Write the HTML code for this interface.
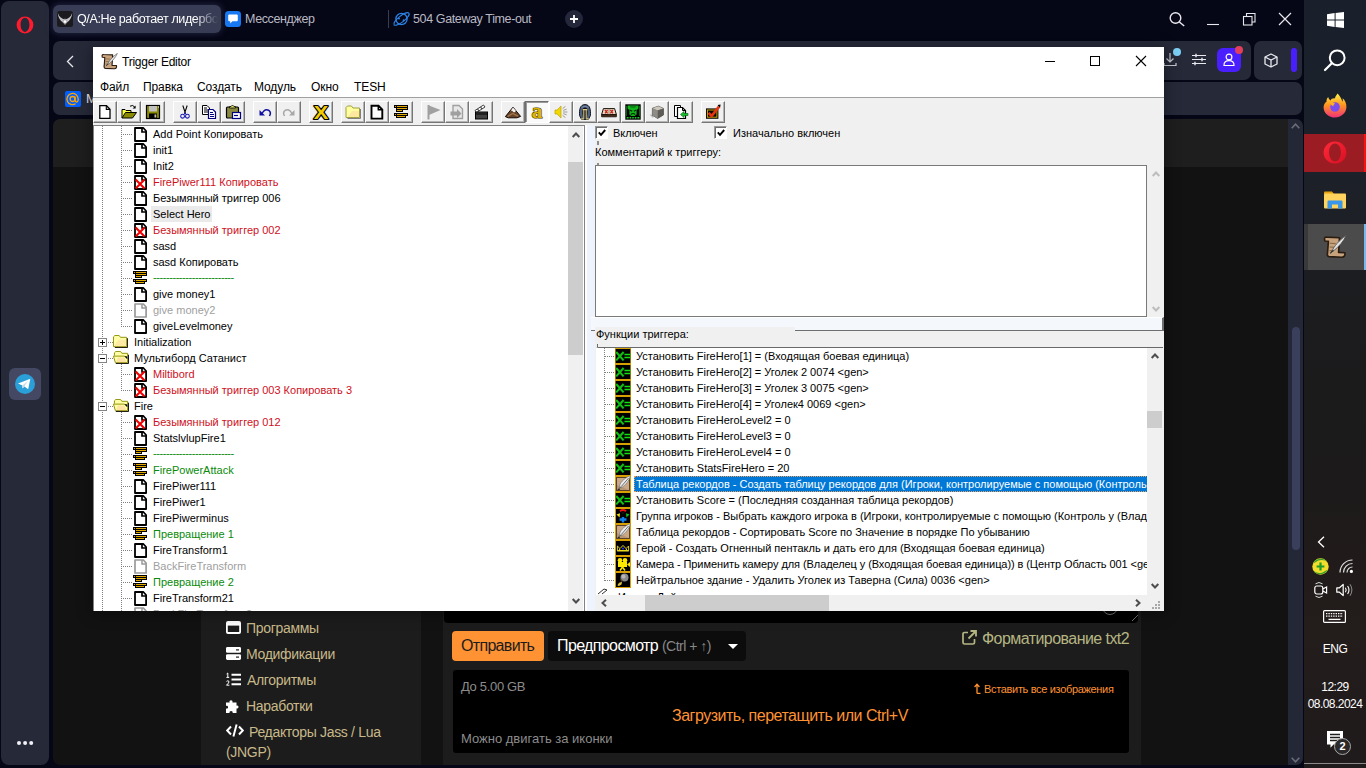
<!DOCTYPE html>
<html lang="ru">
<head>
<meta charset="utf-8">
<title>Trigger Editor</title>
<style>
*{box-sizing:border-box;margin:0;padding:0}
html,body{width:1366px;height:768px;overflow:hidden}
body{background:#050616;font-family:"Liberation Sans",sans-serif;position:relative;color:#fff}
.abs{position:absolute}
svg{display:block;overflow:visible}
/* ---------- Opera chrome ---------- */
#osb{left:1px;top:1px;width:48px;height:764px;background:#262938;border-radius:8px}
#tab1{left:53px;top:5px;width:168px;height:28px;background:#383c55;border-radius:6px;box-shadow:0 0 6px 1px rgba(60,64,100,.55)}
.tabt{font-size:12.5px;color:#fff;white-space:nowrap;top:11px;line-height:16px;letter-spacing:-.38px}
#otb{left:53px;top:41px;width:1198px;height:39px;background:#262938;border-radius:7px}
#otb2{left:1254px;top:41px;width:48px;height:39px;background:#262938;border-radius:7px}
#obm{left:53px;top:82px;width:1249px;height:33px;background:#262938;border-radius:7px}
/* ---------- page ---------- */
#page{left:53px;top:119px;width:1250px;height:646px;background:#121212;border-radius:7px;overflow:hidden}
#phead{left:0;top:0;width:1235px;height:48px;background:#1e1e1e}
#pscroll{left:1235px;top:0;width:15px;height:646px;background:#232736}
.nav{left:173px;height:20px;width:200px;font-size:14px;line-height:20px;color:#c8b98a;letter-spacing:-.32px;white-space:nowrap}
.nav svg{position:absolute;left:0;top:3px}
.nav span{position:absolute;top:0}
.ptx{white-space:nowrap}
/* ---------- taskbar ---------- */
#tb{left:1304px;top:0;width:62px;height:768px;background:linear-gradient(180deg,#1a202b 0%,#1b212b 14%,#1d2027 27%,#1c1d20 36%,#1b1b1c 50%,#1c1a1a 64%,#201b1a 72%,#231d1c 82%,#1f1a1b 100%)}
.tbt{left:1304px;width:62px;text-align:center;font-size:12px;line-height:14px;color:#fff;letter-spacing:-.55px;white-space:nowrap}
/* ---------- Trigger editor window ---------- */
#win{left:93px;top:47px;width:1071px;height:564px;background:#f0f0f0;color:#000;box-shadow:0 2px 14px 1px rgba(0,0,0,.38);overflow:hidden}
#wtitle{left:0;top:0;width:1071px;height:29px;background:#fff}
#wtt{left:29px;top:8px;font-size:12px;line-height:15px;letter-spacing:-.25px;white-space:nowrap}
#wmenu{left:0;top:29px;width:1071px;height:22px;background:#fff;border-bottom:1px solid #fff}
#wmenu:after{content:"";position:absolute;left:0;top:21px;width:100%;height:1px;background:#a0a0a0}
.mi{font-size:12px;top:33px;line-height:14px;white-space:nowrap;letter-spacing:-.1px}
.tbtn{top:54px;width:24px;height:22px;background:#f0f0f0;border:1px solid;border-color:#fff #767676 #767676 #fff;box-shadow:inset -1px -1px 0 #b4b4b4}
.tbtn.dn{border-color:#6e6e6e #fff #fff #6e6e6e;background:#f9f9f9;box-shadow:inset 1px 1px 0 #9a9a9a}
.tbtn svg{position:absolute;left:3px;top:2px}
/* tree */
#tree{left:0;top:78px;width:492px;height:486px;background:#fff;border-top:1px solid #828282;border-left:1px solid #828282;border-right:1px solid #828282;overflow:hidden}
.tr{position:absolute;left:0;height:16px;width:475px;font-size:11px;line-height:16px;white-space:nowrap}
.tr .ic{position:absolute;top:1px}
.tr .tx{position:absolute;top:0;padding:0 2px 0 1px}
.red{color:#d0101c}.grn{color:#0a8a0a}.gry{color:#a0a0a0}
.vl{position:absolute;width:1px;background-image:linear-gradient(#808080 50%,transparent 50%);background-size:1px 2px}
.hl{position:absolute;height:1px;background-image:linear-gradient(90deg,#808080 50%,transparent 50%);background-size:2px 1px}
.sbv{position:absolute;width:15px;background:#f0f0f0}
.sbt{position:absolute;background:#cdcdcd}
/* right pane */
.lbl{position:absolute;font-size:11px;line-height:14px;white-space:nowrap}
.cb{position:absolute;width:13px;height:13px;background:#fff;border:1px solid;border-color:#9a9a9a #fff #fff #9a9a9a;box-shadow:inset 1px 1px 0 #6e6e6e}
#cmt{left:502px;top:118px;width:552px;height:152px;background:#fff;border:1px solid #7a7a7a}
#fl{left:503px;top:300px;width:551px;height:248px;background:#fff;border-top:1px solid #696969;border-left:2px solid #fff;overflow:hidden}
.fr{position:absolute;left:0;height:16px;width:560px;font-size:11px;line-height:16px;white-space:nowrap}
.fr .ic{position:absolute;left:17px;top:0}
.fr .tx{position:absolute;left:38px;top:0}
</style>
</head>
<body>

<svg width="0" height="0" style="position:absolute">
<defs>
<symbol id="doc" viewBox="0 0 13 15"><path d="M1 1H9.4L12.1 4V14H1Z" fill="#fff" stroke="#000" stroke-width="1.8" stroke-linejoin="round"/><path d="M8 1V5H12.1" fill="none" stroke="#000" stroke-width="1.7"/></symbol>
<symbol id="docg" viewBox="0 0 13 15"><path d="M1 1H9.4L12.1 4V14H1Z" fill="#fff" stroke="#9a9a9a" stroke-width="1.7" stroke-linejoin="round"/><path d="M8 1V5H12.1" fill="none" stroke="#9a9a9a" stroke-width="1.5"/></symbol>
<symbol id="docx" viewBox="0 0 13 15"><path d="M1 1H9.4L12.1 4V14H1Z" fill="#fff" stroke="#000" stroke-width="1.8" stroke-linejoin="round"/><path d="M8 1V5H12.1" fill="none" stroke="#000" stroke-width="1.7"/><path d="M1.6 4.6L10.6 13.4M10.6 4.6L1.6 13.4" stroke="#f00000" stroke-width="2.1"/></symbol>
<symbol id="cmti" viewBox="0 0 14 13"><path d="M0 0H14V3H0ZM2 2H14V5H2ZM2 4H9V7H2ZM0 8H14V11H0ZM2 10H12V13H2Z" fill="#000"/><path d="M1 1H2V2H1ZM3 1H13V2H3ZM3 3H13V4H3ZM3 5H8V6H3ZM1 9H2V10H1ZM3 9H13V10H3ZM3 11H11V12H3Z" fill="#e0a800"/></symbol>
<symbol id="fclosed" viewBox="0 0 16 14"><path d="M2 13.5H15.5V3.5" fill="none" stroke="#000" stroke-width="1"/><path d="M.5 12.5V2L2 .5H6.5L8 2.5H14.5V12.5Z" fill="#ffffa8" stroke="#8c8c00" stroke-width="1"/><path d="M6 5H14V12H2V10Z" fill="#ffd0a0" opacity=".45"/></symbol>
<symbol id="fopen" viewBox="0 0 17 14"><path d="M3 13.5H16.5V4" fill="none" stroke="#000" stroke-width="1"/><path d="M1.5 5V2L3 .5H8L9.5 2.5H15.5V6" fill="#ffffa8" stroke="#8c8c00" stroke-width="1"/><path d="M.5 5.5H12L15.5 9V12.5H2.5Z" fill="#ffffa8" stroke="#8c8c00" stroke-width="1"/><path d="M12 5.5L15.5 9V6Z" fill="#000"/><path d="M5 7H12L14.5 12H3.5Z" fill="#ffc8a0" opacity=".5"/></symbol>
<symbol id="plus" viewBox="0 0 9 9"><rect x=".5" y=".5" width="8" height="8" fill="#fff" stroke="#848484"/><path d="M2 4.5H7M4.5 2V7" stroke="#000"/></symbol>
<symbol id="minus" viewBox="0 0 9 9"><rect x=".5" y=".5" width="8" height="8" fill="#fff" stroke="#848484"/><path d="M2 4.5H7" stroke="#000"/></symbol>
<!-- function icons 16x16 -->
<symbol id="fset" viewBox="0 0 16 16"><rect width="16" height="16" fill="#d8a000"/><rect x=".7" y="1" width="14.6" height="14" fill="#000"/><path d="M1.2 4L8.6 12.4M8.6 4L1.2 12.4" stroke="#10c010" stroke-width="2.1"/><path d="M9.4 6.6H15.4M9.4 9.6H15.4" stroke="#10e010" stroke-width="1.5"/></symbol>
<symbol id="flb" viewBox="0 0 16 16"><rect width="16" height="16" fill="#d8a000"/><rect x="1" y="1" width="14" height="14" fill="#5a4028"/><rect x="2" y="2" width="12" height="12" fill="#c9a987"/><path d="M2 9L14 14V14H2Z" fill="#a88868" opacity=".6"/><path d="M4.4 11.4C4.2 7.4 8.6 2.4 15.4 -.4C14.4 4.6 10.6 9.4 6 11.8Z" fill="#ececec" stroke="#6a6a6a" stroke-width=".6"/><path d="M2.8 13.600000000000001L6.4 10.4L13.6 2" stroke="#4a4a4a" stroke-width=".8" fill="none"/><path d="M2.6 13.8L5 13.200000000000001" stroke="#222" stroke-width=".9"/></symbol>
<symbol id="fpg" viewBox="0 0 16 16"><rect width="16" height="16" fill="#d8a000"/><rect x="1" y="1" width="14" height="14" fill="#000"/><path d="M5 3.2Q8 .8 11 3.2" stroke="#f01010" stroke-width="2" fill="none"/><circle cx="8" cy="4.6" r="1.6" fill="#101010"/><path d="M1.5 6.5L5 5.2L4.6 9.4Z" fill="#f0e010"/><path d="M14.5 6.5L11 5.2L11.4 9.4Z" fill="#10c020"/><path d="M4.5 11.5H11.5M8 9V14.5" stroke="#1080f0" stroke-width="2.4"/></symbol>
<symbol id="fhero" viewBox="0 0 16 16"><rect width="16" height="16" fill="#d8a000"/><rect x="1" y="1" width="14" height="14" fill="#000"/><path d="M2.4 10.6V6L5 8.6L8 5.4L11 8.6L13.6 6V10.6Z" fill="none" stroke="#f0e020" stroke-width=".9"/><path d="M2.2 10.8H13.8" stroke="#f0e020" stroke-width="1.3"/><circle cx="8" cy="8.6" r="1.1" fill="#2030e0"/><circle cx="4.6" cy="9.4" r=".6" fill="#f0e020"/><circle cx="11.4" cy="9.4" r=".6" fill="#f0e020"/></symbol>
<symbol id="fcam" viewBox="0 0 16 16"><rect width="16" height="16" fill="#d8a000"/><rect x="1" y="1" width="14" height="14" fill="#000"/><circle cx="5" cy="4.3" r="2.3" fill="#ffe800"/><circle cx="10" cy="4.3" r="2.3" fill="#ffe800"/><rect x="3" y="6" width="9" height="5" fill="#ffe800"/><path d="M12 8.5L15 6V11Z" fill="#ffe800"/><path d="M5 14.5L7.5 11L10 14.5" stroke="#ffe800" stroke-width="1.5" fill="none"/></symbol>
<symbol id="fnb" viewBox="0 0 16 16"><rect width="16" height="16" fill="#d8a000"/><rect x="1" y="1" width="14" height="14" fill="#000"/><circle cx="9.5" cy="5.5" r="4" fill="#8a8a8a"/><circle cx="8.5" cy="4.5" r="2" fill="#b8b8b8"/><path d="M5 6L8 9L6 10Z" fill="#5a4020"/><path d="M2.5 13.5C3 11 5 10 7 10L6.5 12.5L4 14Z" fill="#d8c040"/></symbol>
<symbol id="scroll" viewBox="0 0 16 16"><path d="M1 2.6Q1 1.2 2.6 1.4L11 1.8L10.4 11.6L14.6 11.8Q15 14.6 12.6 14.8L4 14.4Q2.6 14.2 3 12.2L3.6 4.2L1.2 4Z" fill="#c7a27c" stroke="#2a1c10" stroke-width="1.1" stroke-linejoin="round"/><path d="M4.5 5.5L8.5 5.700000000000001M4.4 8L8 8.2M4.3 10.4L7 10.5" stroke="#8a6a4a" stroke-width=".8"/><path d="M5.6 11.2C7.6 7.4 10.6 3.6 15.4 .4C13.8 4 10.8 7.6 7 10.600000000000001Z" fill="#e4e4e4" stroke="#555" stroke-width=".6"/><path d="M4.8 12.2L7 10" stroke="#333" stroke-width=".8"/></symbol>
</defs>
</svg>

<!-- Opera sidebar -->
<div id="osb" class="abs"></div>
<svg class="abs" style="left:16px;top:16px" width="18" height="18" viewBox="0 0 18 18"><path d="M9 .6A8.4 8.4 0 1 0 9 17.4A8.4 8.4 0 1 0 9 .6ZM9 1.8C11.6 1.8 13.4 5 13.4 8.8S11.6 15.9 9 15.9S4.6 12.600000000000001 4.6 8.8S6.4 1.8 9 1.8Z" fill="#ff1b2d" fill-rule="evenodd"/></svg>
<div class="abs" style="left:9px;top:368px;width:32px;height:32px;border-radius:6px;background:#454862"></div>
<svg class="abs" style="left:15px;top:374px" width="20" height="20" viewBox="0 0 20 20"><circle cx="10" cy="10" r="10" fill="#2a9fd8"/><path d="M3 9.6L15.3 4.8L13.2 15.2L9.4 12.4L7.6 14.2L7.3 11.4Z" fill="#fff"/><path d="M7.3 11.4L13 6.8L9.4 12.4L7.6 14.2Z" fill="#c8ddea"/></svg>
<div class="abs" style="left:17.3px;top:741.3px;width:3.4px;height:3.4px;border-radius:2px;background:#f0f0f6;box-shadow:6.1px 0 0 #f0f0f6,12.2px 0 0 #f0f0f6"></div>
<!-- tabs -->
<div id="tab1" class="abs"></div>
<svg class="abs" style="left:57px;top:11px" width="16" height="16" viewBox="0 0 16 16"><rect width="16" height="16" rx="2.5" fill="#1b1b1f"/><path d="M.8 2C1.2 7.6 4.2 10.8 8 12.8C11.8 10.8 14.8 7.6 15.2 2C13.8 6 11.2 8 8 8.4C4.8 8 2.2 6 .8 2Z" fill="#c4c4c8"/><path d="M8 7.2L10.8 10.6L8 14L5.2 10.6Z" fill="#a0a0a6"/><circle cx="8" cy="10.6" r="1.4" fill="#fff"/></svg>
<div class="abs tabt" style="left:77px;width:141px;overflow:hidden;-webkit-mask-image:linear-gradient(90deg,#000 118px,transparent 141px);mask-image:linear-gradient(90deg,#000 118px,transparent 141px)">Q/A:Не работает лидербо</div>
<svg class="abs" style="left:225px;top:11px" width="16" height="16" viewBox="0 0 16 16"><rect width="16" height="16" rx="3.5" fill="#1778f2"/><path d="M3.2 4.6Q3.2 3.6 4.2 3.6H11.8Q12.8 3.6 12.8 4.6V9.2Q12.8 10.2 11.8 10.2H7.4L5.2 12.4V10.2H4.2Q3.2 10.2 3.2 9.2Z" fill="#fff"/></svg>
<div class="abs tabt" style="left:245px;color:#b9bac4">Мессенджер</div>
<div class="abs" style="left:388px;top:10px;width:1px;height:18px;background:#3a3d52"></div>
<svg class="abs" style="left:393px;top:10px" width="17" height="18" viewBox="0 0 17 18"><circle cx="8.5" cy="9" r="5.6" fill="none" stroke="#2a82e4" stroke-width="1.3"/><ellipse cx="8.5" cy="9" rx="9.4" ry="3" fill="none" stroke="#2a82e4" stroke-width="1.2" transform="rotate(-38 8.5 9)"/><circle cx="6" cy="8.4" r="1" fill="#2a82e4"/><circle cx="10.6" cy="10.2" r="1" fill="#2a82e4"/></svg>
<div class="abs tabt" style="left:413px;color:#b9bac4">504 Gateway Time-out</div>
<div class="abs" style="left:565px;top:10px;width:18px;height:18px;border-radius:9px;background:#24273a"></div>
<svg class="abs" style="left:570px;top:15px" width="8" height="8"><path d="M4 0V8M0 4H8" stroke="#fff" stroke-width="1.8"/></svg>
<!-- window controls -->
<svg class="abs" style="left:1168px;top:10px" width="128" height="18" viewBox="0 0 128 18"><circle cx="7.500000000000001" cy="8" r="5.3" fill="none" stroke="#e8e8ee" stroke-width="1.4"/><path d="M11.4 12L16.2 16" stroke="#e8e8ee" stroke-width="1.5"/><path d="M39 14.5H51" stroke="#e8e8ee" stroke-width="1.1"/><rect x="75.5" y="6.5" width="8.5" height="8.5" fill="none" stroke="#e8e8ee" stroke-width="1.1"/><path d="M78.5 6.5V3.5H87V12H84" fill="none" stroke="#e8e8ee" stroke-width="1.1"/><path d="M111 3L123 15M123 3L111 15" stroke="#e8e8ee" stroke-width="1.2"/></svg>
<!-- toolbar -->
<div id="otb" class="abs"></div>
<svg class="abs" style="left:66px;top:55px" width="8" height="13"><path d="M7 1L1.5 6.5L7 12" fill="none" stroke="#e8e8ee" stroke-width="1.3"/></svg>
<svg class="abs" style="left:1163px;top:52px" width="14" height="16" viewBox="0 0 14 16"><path d="M7 1V10M3.5 6.5L7 10L10.5 6.5" fill="none" stroke="#c8c8d0" stroke-width="1.2"/><path d="M1 11V13.5H13V11" fill="none" stroke="#c8c8d0" stroke-width="1.2"/></svg>
<div class="abs" style="left:1173px;top:48px;width:8px;height:8px;border-radius:4px;background:#7dcff5"></div>
<svg class="abs" style="left:1192px;top:53px" width="14" height="13" viewBox="0 0 14 13"><path d="M0 2.5H14M0 6.5H14M0 10.5H14" stroke="#e8e8ee" stroke-width="1.2"/><path d="M4 .8V4.2M10 4.8V8.2M3 8.8V12.2" stroke="#e8e8ee" stroke-width="1.4"/></svg>
<div class="abs" style="left:1217px;top:48px;width:24px;height:24px;border-radius:6px;background:#4a1fff"></div>
<svg class="abs" style="left:1223px;top:53px" width="12" height="14" viewBox="0 0 12 14"><circle cx="6" cy="4" r="2.9" fill="none" stroke="#fff" stroke-width="1.2"/><path d="M1 12.5C.8 9 3 7.600000000000001 6 7.600000000000001S11.2 9 11 12.5Z" fill="none" stroke="#fff" stroke-width="1.2"/></svg>
<div class="abs" style="left:1235px;top:46px;width:8px;height:8px;border-radius:4px;background:#e0405a"></div>
<div id="otb2" class="abs"></div>
<svg class="abs" style="left:1264px;top:53px" width="14" height="15" viewBox="0 0 14 15"><path d="M7 1L13 4V11L7 14L1 11V4Z" fill="none" stroke="#e8e8ee" stroke-width="1.3" stroke-linejoin="round"/><path d="M1 4L7 7L13 4M7 7V14" fill="none" stroke="#e8e8ee" stroke-width="1.3"/></svg>
<div class="abs" style="left:1291px;top:48px;width:6px;height:24px;border-radius:3px;background:#4a1fff"></div>
<!-- bookmarks -->
<div id="obm" class="abs"></div>
<div class="abs" style="left:65px;top:91px;width:16px;height:16px;border-radius:2px;background:#0060ff"></div>
<svg class="abs" style="left:66px;top:92px" width="14" height="14" viewBox="0 0 14 14"><circle cx="6.6" cy="7" r="2.5" fill="none" stroke="#ffa400" stroke-width="1.3"/><path d="M9.1 4.5V8.3Q9.1 10 10.5 10T12.2 8V7A5.6 5.6 0 1 0 9.6 11.8" fill="none" stroke="#ffa400" stroke-width="1.3"/></svg>
<div class="abs" style="left:86px;top:91px;font-size:13px;line-height:16px;color:#e8e8ee">Mail</div>

<!-- page -->
<div id="page" class="abs">
  <div id="phead" class="abs"></div>
  <!-- left nav panel -->
  <div class="abs" style="left:148px;top:480px;width:220px;height:166px;background:#1c1c1c"></div>
  <!-- main column panel -->
  <div class="abs" style="left:390px;top:480px;width:698px;height:166px;background:#1c1c1c"></div>
  <div class="abs" style="left:391px;top:470px;width:694px;height:34px;background:#000;border-radius:4px"></div>
  <div class="nav abs" style="top:499px"><svg width="15" height="13" viewBox="0 0 15 13"><rect width="15" height="13" rx="2" fill="#fff"/><rect x="1.8" y="4.6" width="11.4" height="6.4" fill="#1c1c1c"/></svg><span style="left:20px">Программы</span></div>
  <div class="nav abs" style="top:525px"><svg width="15" height="13" viewBox="0 0 15 13"><rect width="15" height="5.8" rx="1.4" fill="#fff"/><rect y="7.2" width="15" height="5.8" rx="1.4" fill="#fff"/><rect x="10" y="2.3" width="3" height="1.2" fill="#1c1c1c"/><rect x="10" y="9.5" width="3" height="1.2" fill="#1c1c1c"/></svg><span style="left:20px">Модификации</span></div>
  <div class="nav abs" style="top:551px"><svg width="15" height="13" viewBox="0 0 15 13"><path d="M5.5 1.7H15M5.5 6.5H15M5.5 11.3H15" stroke="#fff" stroke-width="2"/><path d="M1.8 0V4.4M.6 1L1.8 0M.4 4.4H3.200000000000001M.5 8.4Q1.8 7.2 3 8.4Q3.4 9.6 .5 12.2H3.4" stroke="#fff" stroke-width="1" fill="none"/></svg><span style="left:21px">Алгоритмы</span></div>
  <div class="nav abs" style="top:577px"><svg width="15" height="14" viewBox="0 0 15 14"><path d="M0 3.5H3.6C2.6 .6 7.4 .6 6.4 3.5H10.5V6.8C13.2 5.6 13.2 10.6 10.5 9.4V14H6.6C7.6 11.2 2.6 11.2 3.6 14H0V9.6C2.8 10.6 2.8 6 0 7Z" fill="#fff"/></svg><span style="left:20px">Наработки</span></div>
  <div class="nav abs" style="top:603px"><svg width="18" height="13" viewBox="0 0 18 13" style="top:2px"><path d="M5 2.5L1.2 6.5L5 10.5M13 2.5L16.8 6.5L13 10.5M10.6 .5L7.4 12.5" fill="none" stroke="#fff" stroke-width="2"/></svg><span style="left:23px">Редакторы Jass / Lua</span></div>
  <div class="nav abs" style="top:623px"><span style="left:0">(JNGP)</span></div>
  <!-- buttons -->
  <div class="abs" style="left:399px;top:512px;width:92px;height:30px;background:#ff9232;border-radius:4px"></div>
  <div class="abs ptx" style="left:408px;top:517px;font-size:16px;line-height:20px;color:#1c1c1c;letter-spacing:-.68px">Отправить</div>
  <div class="abs" style="left:495px;top:512px;width:198px;height:30px;background:#0c0c0c;border-radius:4px"></div>
  <div class="abs ptx" style="left:504px;top:517px;font-size:16px;line-height:20px;color:#fff;letter-spacing:-.62px">Предпросмотр <span style="font-size:14px;color:#888;letter-spacing:-.5px">(Ctrl + ↑)</span></div>
  <svg class="abs" style="left:675px;top:525px" width="10" height="5"><path d="M0 0H10L5 5Z" fill="#fff"/></svg>
  <svg class="abs" style="left:909px;top:511px" width="15" height="15" viewBox="0 0 15 15"><path d="M6 2.5H2.600000000000001Q1 2.5 1 4.1V12.4Q1 14 2.600000000000001 14H10.9Q12.5 14 12.5 12.4V9" fill="none" stroke="#b5b582" stroke-width="1.7"/><path d="M8.5 1H14V6.500000000000001M14 1L6.5 8.5" fill="none" stroke="#b5b582" stroke-width="1.8"/></svg>
  <div class="abs ptx" style="left:929px;top:510px;font-size:16px;line-height:20px;color:#b5b582;letter-spacing:-.56px">Форматирование txt2</div>
  <!-- upload box -->
  <div class="abs" style="left:400px;top:551px;width:676px;height:83px;background:#000;border-radius:3px"></div>
  <div class="abs ptx" style="left:408px;top:560px;font-size:13px;line-height:16px;color:#8c8c8c;letter-spacing:-.33px">До 5.00 GB</div>
  <div class="abs ptx" style="left:619px;top:587px;font-size:16px;line-height:20px;color:#ff9232;letter-spacing:-.49px">Загрузить, перетащить или Ctrl+V</div>
  <div class="abs ptx" style="left:408px;top:612px;font-size:13px;line-height:16px;color:#8c8c8c">Можно двигать за иконки</div>
  <svg class="abs" style="left:921px;top:564px" width="7" height="11" viewBox="0 0 7 11"><path d="M3 10.4V1.5M.6 4L3 1.2L5.4 4M3 10.4H6.500000000000001" fill="none" stroke="#ff9232" stroke-width="1.3"/></svg>
  <div class="abs ptx" style="left:931px;top:563px;font-size:11px;line-height:14px;color:#ff9232;letter-spacing:-.33px">Вставить все изображения</div>
  <!-- textarea resize grip -->
  <svg class="abs" style="left:1079px;top:496px" width="6" height="6"><path d="M0 6L6 0" stroke="#777" stroke-width="1"/></svg>
  <div class="abs" style="left:1049px;top:468px;width:16px;height:28px;border-radius:8px;border:1.5px solid #777"></div>
  <!-- scrollbar -->
  <div id="pscroll" class="abs"></div>
  <div class="abs" style="left:1239px;top:208px;width:8px;height:223px;border-radius:4px;background:#3a3f5c"></div>
  <svg class="abs" style="left:1238px;top:4px" width="9" height="6"><path d="M.7 5.300000000000001L4.5 1.2L8.3 5.300000000000001" fill="none" stroke="#6a6c78" stroke-width="1.6"/></svg>
  <svg class="abs" style="left:1238px;top:638px" width="9" height="6"><path d="M.7 .7L4.5 4.8L8.3 .7" fill="none" stroke="#6a6c78" stroke-width="1.6"/></svg>
</div>

<!-- taskbar -->
<div id="tb" class="abs"></div>
<svg class="abs" style="left:1327px;top:12px" width="17" height="16" viewBox="0 0 17 16"><path d="M0 2.2L7.6 1.1V7.5H0ZM8.6 1L17 0V7.5H8.6ZM0 8.5H7.6V14.9L0 13.8ZM8.6 8.5H17V16L8.6 15Z" fill="#fff"/></svg>
<svg class="abs" style="left:1323px;top:48px" width="24" height="24" viewBox="0 0 24 24"><circle cx="14.2" cy="9.8" r="7.4" fill="none" stroke="#fff" stroke-width="2"/><path d="M8.8 15.2L2 22" stroke="#fff" stroke-width="2.2" stroke-linecap="round"/></svg>
<!-- firefox -->
<svg class="abs" style="left:1323px;top:93px" width="24" height="25" viewBox="0 0 24 25"><defs><linearGradient id="ffg" x1="0" y1="0" x2="0" y2="1"><stop offset="0" stop-color="#fff04a"/><stop offset=".45" stop-color="#ff9a1e"/><stop offset="1" stop-color="#f0307a"/></linearGradient></defs><path d="M14.5 .5C13.6 2.2 12 3.6 12 5.4C10 5 8 6 7.6 7.4C6.4 6.6 5.4 5.6 5.2 4C3.6 5.4 3.4 7.6 3.6 8.6C1.6 10 .4 12.4 .6 15C1 20.4 6 24.6 12 24.6S23 20.2 23.4 14.6C23.7 10 21.8 7 19.6 5.2C20 6.8 19.8 8 19.4 8.8C18.6 5.200000000000001 16.2 2.4 14.5 .5Z" fill="url(#ffg)"/><circle cx="12" cy="14" r="4.8" fill="#7a4df0"/><path d="M7 9.5C9 9 11 9.6 12.2 11C10.8 11 10 12 10.6 13.2C8.8 13 7.2 11.4 7 9.5Z" fill="#ffb020"/></svg>
<!-- opera button -->
<div class="abs" style="left:1304px;top:134px;width:62px;height:38px;background:#9c1c23"></div>
<div class="abs" style="left:1364px;top:134px;width:2px;height:38px;background:#ff1010"></div>
<svg class="abs" style="left:1323px;top:141px" width="24" height="23" viewBox="0 0 24 23"><defs><linearGradient id="opg" x1="0" y1="0" x2="1" y2="1"><stop offset="0" stop-color="#ff2a3a"/><stop offset="1" stop-color="#d80f22"/></linearGradient></defs><path d="M12 .4A11.4 11.1 0 1 0 12 22.6A11.4 11.1 0 1 0 12 .4ZM12 2.6C15.4 2.6 17.9 6.4 17.9 11.5S15.4 20.4 12 20.4S6.1 16.6 6.1 11.5S8.6 2.6 12 2.6Z" fill="url(#opg)" fill-rule="evenodd"/></svg>
<!-- explorer -->
<svg class="abs" style="left:1324px;top:191px" width="22" height="18" viewBox="0 0 22 18"><path d="M0 1.5Q0 .5 1 .5H8L10 3H0Z" fill="#e8a210"/><rect y="2.5" width="22" height="15" rx="1" fill="#ffd45e"/><path d="M3.5 17.5V10.5Q3.5 9.5 4.5 9.5H17.5Q18.5 9.5 18.5 10.5V17.5H14V13.5H8V17.5Z" fill="#3a96e8"/></svg>
<!-- trigger editor button -->
<div class="abs" style="left:1304px;top:224px;width:62px;height:46px;background:#4b4b4c"></div>
<div class="abs" style="left:1304px;top:224px;width:4px;height:46px;background:#39393a"></div>
<div class="abs" style="left:1364px;top:224px;width:2px;height:46px;background:#76b9ed"></div>
<svg class="abs" style="left:1323px;top:235px" width="24" height="24" viewBox="0 0 16 16"><use href="#scroll"/></svg>
<!-- tray -->
<svg class="abs" style="left:1317px;top:536px" width="8" height="12"><path d="M7 .8L1.500000000000001 6L7 11.2" fill="none" stroke="#fff" stroke-width="1.3"/></svg>
<svg class="abs" style="left:1312px;top:558px" width="17" height="17" viewBox="0 0 17 17"><circle cx="8.5" cy="8.5" r="8.2" fill="#f2dc2c"/><path d="M1.2 5.5A8.2 8.2 0 0 1 15.6 4.500000000000001Q12 .8 6.5 2.6ZM15.8 11.5A8.2 8.2 0 0 1 1.4 12.5Q5 16.2 10.5 14.4Z" fill="#3aa028"/><path d="M8.5 4.600000000000001V12.4M4.600000000000001 8.5H12.4" stroke="#1e9a2a" stroke-width="2.2"/></svg>
<svg class="abs" style="left:1339px;top:559px" width="15" height="15" viewBox="0 0 15 15"><path d="M1 13.5A12.5 12.5 0 0 1 13.5 1M4.5 13.5A9 9 0 0 1 13.5 4.500000000000001M8 13.5A5.5 5.5 0 0 1 13.5 8" fill="none" stroke="#e0e0e0" stroke-width="1.2"/><circle cx="12.4" cy="12.4" r="1.6" fill="#fff"/></svg>
<svg class="abs" style="left:1314px;top:581px" width="14" height="18" viewBox="0 0 14 18"><rect x=".8" y="5" width="8" height="8" rx="2" fill="none" stroke="#fff" stroke-width="1.2"/><path d="M8.8 8L12.6 6V12L8.8 10" fill="none" stroke="#fff" stroke-width="1.2"/><path d="M1.5 2.8Q5 .2 8.5 2.8M1.5 15.2Q5 17.8 8.5 15.2" fill="none" stroke="#d8d8d8" stroke-width="1"/></svg>
<svg class="abs" style="left:1336px;top:583px" width="18" height="14" viewBox="0 0 18 14"><path d="M.8 4.8H3.5L7.2 1.4V12.6L3.5 9.2H.8Z" fill="none" stroke="#fff" stroke-width="1.2" stroke-linejoin="round"/><path d="M9.4 4.8Q11 7 9.4 9.2M11.6 3Q14.4 7 11.6 11" fill="none" stroke="#fff" stroke-width="1.1"/><path d="M14 1.2Q17.800000000000001 7 14 12.8" fill="none" stroke="#909090" stroke-width="1"/></svg>
<svg class="abs" style="left:1323px;top:610px" width="23" height="13" viewBox="0 0 23 13"><rect x=".6" y=".6" width="21.8" height="11.8" rx="1" fill="none" stroke="#fff" stroke-width="1.2"/><path d="M3 3.6H20M3 6.2H20" stroke="#fff" stroke-width="1.2" stroke-dasharray="1.4 1"/><path d="M5.5 9.4H17.5" stroke="#fff" stroke-width="1.3"/></svg>
<div class="abs tbt" style="top:642px">ENG</div>
<div class="abs tbt" style="top:680px">12:29</div>
<div class="abs tbt" style="top:697px">08.08.2024</div>
<svg class="abs" style="left:1327px;top:731px" width="16" height="17" viewBox="0 0 16 17"><path d="M0 0H16V13.4H6.5L3.5 16.8V13.4H0Z" fill="#fff"/><path d="M3 3.5H13M3 6.5H13M3 9.5H13" stroke="#221d1d" stroke-width="1.3"/></svg>
<div class="abs" style="left:1334px;top:738px;width:17px;height:17px;border-radius:9px;background:#2b2829;border:1.2px solid #a8a8a8;color:#fff;font-size:11px;font-weight:bold;line-height:14.5px;text-align:center">2</div>
<div class="abs" style="left:1304px;top:763px;width:62px;height:1px;background:#8a8888"></div>

<div id="win" class="abs">
<div id="wtitle" class="abs"></div>
<svg class="abs" style="left:8px;top:6px" width="17" height="17" viewBox="0 0 16 16"><use href="#scroll"/></svg>

<div id="wtt" class="abs">Trigger Editor</div>
<svg class="abs" style="left:952px;top:9px" width="102" height="11" viewBox="0 0 102 11"><path d="M0 5.5H10" stroke="#000" stroke-width="1"/><rect x="45.5" y=".5" width="9" height="9" fill="none" stroke="#000"/><path d="M91 0L101 10M101 0L91 10" stroke="#000" stroke-width="1.1"/></svg>
<div id="wmenu" class="abs"></div>
<div class="abs mi" style="left:7px">Файл</div>
<div class="abs mi" style="left:50px">Правка</div>
<div class="abs mi" style="left:104px">Создать</div>
<div class="abs mi" style="left:161px">Модуль</div>
<div class="abs mi" style="left:218px">Окно</div>
<div class="abs mi" style="left:261px">TESH</div>
<div class="tbtn abs" style="left:0px"><svg width="16" height="16" viewBox="0 0 16 16"><path d="M2.8 1.7H9.5L13 5.2V14.3H2.8Z" fill="#fff" stroke="#000" stroke-width="1.3"/><path d="M9.3 1.7V5.4H13" fill="none" stroke="#000" stroke-width="1.1"/></svg></div>
<div class="tbtn abs" style="left:24px"><svg width="16" height="16" viewBox="0 0 16 16"><path d="M9 2.2Q12 .2 14 3.4" fill="none" stroke="#000" stroke-width="1"/><path d="M14.6 1.5V4.5H11.6Z" fill="#000"/><path d="M1 14V5.5H4L5 6.5H10V8" fill="#ffff40" stroke="#000" stroke-width="1"/><path d="M1 14L4.5 8.5H15.5L11.5 14Z" fill="#8a8a00" stroke="#000" stroke-width="1"/></svg></div>
<div class="tbtn abs" style="left:48px"><svg width="16" height="16" viewBox="0 0 16 16"><rect x="1.5" y="1.5" width="13" height="13" fill="#8a8a00" stroke="#000" stroke-width="1.2"/><rect x="4" y="2" width="8" height="5.5" fill="#c0c0c0"/><rect x="4" y="9.5" width="8" height="5" fill="#000"/><rect x="9.5" y="10.5" width="1.8" height="3" fill="#c0c0c0"/><rect x="13" y="2.5" width="1" height="1" fill="#fff"/></svg></div>
<div class="tbtn abs" style="left:80px"><svg width="16" height="16" viewBox="0 0 16 16"><path d="M5.8 1.5L8.5 9.5M10.2 1.5L7.5 9.5" stroke="#000" stroke-width="1.05" fill="none"/><circle cx="5.6" cy="12.2" r="1.9" fill="none" stroke="#1818b0" stroke-width="1.05"/><circle cx="10.4" cy="12.2" r="1.9" fill="none" stroke="#1818b0" stroke-width="1.05"/><path d="M6.6 10.6L8 8.8L9.4 10.6" stroke="#1818b0" stroke-width="1" fill="none"/></svg></div>
<div class="tbtn abs" style="left:104px"><svg width="16" height="16" viewBox="0 0 16 16"><path d="M1.5 1.5H6L8.5 4V10.5H1.5Z" fill="#fff" stroke="#000" stroke-width="1"/><path d="M3 4H6M3 6H7M3 8H7" stroke="#000" stroke-width="1"/><path d="M7.5 5.5H12L14.5 8V14.5H7.5Z" fill="#fff" stroke="#000080" stroke-width="1.2"/><path d="M9 8.5H12M9 10.5H13M9 12.5H13" stroke="#000080" stroke-width="1"/></svg></div>
<div class="tbtn abs" style="left:128px"><svg width="16" height="16" viewBox="0 0 16 16"><rect x="1.5" y="3" width="12" height="11" rx="1" fill="#8a8a40" stroke="#000" stroke-width="1.2"/><path d="M4.5 4V2.5H6L7.5 1L9 2.5H10.5V4Z" fill="#e0e060" stroke="#000" stroke-width=".8"/><rect x="7.5" y="8.5" width="8" height="6" fill="#fff" stroke="#000080" stroke-width="1.2"/><path d="M9 11.5H13" stroke="#000080" stroke-width="1.2"/></svg></div>
<div class="tbtn abs" style="left:160px"><svg width="16" height="16" viewBox="0 0 16 16"><path d="M5 9.5Q8 4 12 6.5Q14.5 8.5 12.5 12" fill="none" stroke="#1010a0" stroke-width="1.5"/><path d="M2.5 6V11.5H8Z" fill="#1010a0"/></svg></div>
<div class="tbtn abs" style="left:184px"><svg width="16" height="16" viewBox="0 0 16 16"><path d="M11 9.5Q8 4 4 6.5Q1.5 8.5 3.5 12" fill="none" stroke="#a8a8a8" stroke-width="1.5"/><path d="M13.5 6V11.5H8Z" fill="#a8a8a8"/></svg></div>
<div class="tbtn abs" style="left:216px"><svg width="16" height="16" viewBox="0 0 16 16"><text x="8" y="14.6" text-anchor="middle" font-family="Liberation Sans,sans-serif" font-weight="bold" font-size="19" fill="#f2cc00" stroke="#000" stroke-width="2.2" stroke-linejoin="round" paint-order="stroke" transform="translate(-1.2 0) scale(1.15 1)">X</text></svg></div>
<div class="tbtn abs" style="left:248px"><svg width="16" height="16" viewBox="0 0 16 16"><path d="M2.5 14.5H15.5V5" fill="none" stroke="#808080" stroke-width="1"/><path d="M1 13.5V3.5L2.5 2H6.5L8 4H14.5V13.5Z" fill="#ffffa0" stroke="#a0a040" stroke-width="1"/><path d="M7 7H14V13H3Z" fill="#ffc8a0" opacity=".4"/></svg></div>
<div class="tbtn abs" style="left:272px"><svg width="16" height="16" viewBox="0 0 16 16"><path d="M2.5 1.8H9.5L13.3 5.6V14.6H2.5Z" fill="#fff" stroke="#000" stroke-width="1.9"/><path d="M9.3 1.8V5.8H13.3" fill="none" stroke="#000" stroke-width="1.5"/></svg></div>
<div class="tbtn abs" style="left:296px"><svg width="16" height="16" viewBox="0 0 16 16"><g transform="translate(1 1)"><path d="M0 0H14V3H0ZM2 2H14V5H2ZM2 4H9V7H2ZM0 8H14V11H0ZM2 10H12V13H2Z" fill="#000"/><path d="M1 1H2V2H1ZM3 1H13V2H3ZM3 3H13V4H3ZM3 5H8V6H3ZM1 9H2V10H1ZM3 9H13V10H3ZM3 11H11V12H3Z" fill="#e0a800"/></g></svg></div>
<div class="tbtn abs" style="left:328px"><svg width="16" height="16" viewBox="0 0 16 16"><path d="M3.5 1V15.5" stroke="#a0a0a0" stroke-width="2"/><path d="M4 1.5L15.5 6L4 11Z" fill="#a0a0a0"/></svg></div>
<div class="tbtn abs" style="left:352px"><svg width="16" height="16" viewBox="0 0 16 16"><path d="M4 1.5H10L13.5 5V14.5H4Z" fill="#e8e8e8" stroke="#a0a0a0" stroke-width="1.4"/><path d="M1.5 7.5H8V5L12.5 9.5L8 14V11.5H1.5Z" fill="#a0a0a0"/></svg></div>
<div class="tbtn abs" style="left:376px"><svg width="16" height="16" viewBox="0 0 16 16"><path d="M2 6.5L10.5 1L12 3L3.5 8.5Z" fill="#fff" stroke="#404040" stroke-width="1"/><path d="M4.5 5L6 7M7.5 3L9 5" stroke="#404040" stroke-width="1.2"/><rect x="2.5" y="8" width="12" height="7" fill="#404040" stroke="#000" stroke-width="1"/><path d="M3 10H14" stroke="#000" stroke-width="1"/></svg></div>
<div class="tbtn abs" style="left:408px"><svg width="16" height="16" viewBox="0 0 16 16"><path d="M.4 12.6L8 3.2L15.6 12.4L12 13.8H3.2Z" fill="#6a4428" stroke="#100804" stroke-width="1"/><path d="M8 3.4L11 7L9 8.4L6.800000000000001 6.6L5.4 7.4Z" fill="#f4f4f4"/><path d="M2.6 12.6L7.6 9.4L13 12.2" stroke="#a07850" stroke-width="1.3" fill="none"/></svg></div>
<div class="tbtn abs dn" style="left:432px"><svg width="16" height="16" viewBox="0 0 16 16"><text x="8" y="14" text-anchor="middle" font-family="Liberation Serif,serif" font-weight="bold" font-size="22" fill="#dcb400" stroke="#4a3a00" stroke-width="1.1" paint-order="stroke">a</text></svg></div>
<div class="tbtn abs" style="left:456px"><svg width="16" height="16" viewBox="0 0 16 16"><path d="M2 6H4.2L8 2V14L4.2 10H2Z" fill="#f0d800" stroke="#c0a000" stroke-width=".7"/><path d="M9.6 4.6L12.4 2.4M10.2 6.4L13.6 5.2M10.2 8H14.4M10.2 9.6L13.6 10.8M9.6 11.4L12.4 13.6" stroke="#909090" stroke-width=".9"/></svg></div>
<div class="tbtn abs" style="left:480px"><svg width="16" height="16" viewBox="0 0 16 16"><path d="M8 .6C3 .6 2.2 5.6 2.6 11.6L4.6 15.4H11.4L13.4 11.6C13.8 5.6 13 .6 8 .6Z" fill="#52627e" stroke="#0c1420" stroke-width="1"/><path d="M4 3.6Q8 .8 12 3.6Q8 2.4 4 3.6Z" fill="#8c9cb8"/><path d="M8 3.6C5.600000000000001 3.6 5.2 6.4 5.4 9.6L6.2 14.6H9.8L10.6 9.6C10.8 6.4 10.4 3.6 8 3.6Z" fill="#0c1018"/><path d="M6.8 6V14.6M9.2 6V14.6M5.8 5.6H10.2" stroke="#dcc878" stroke-width="1.1"/><path d="M4.2 14.9H7M9 14.9H11.8" stroke="#dcc878" stroke-width="1.1"/></svg></div>
<div class="tbtn abs" style="left:504px"><svg width="16" height="16" viewBox="0 0 16 16"><path d="M2.4 4.6H13.6L15.4 10.6H.6Z" fill="#e4d8c4" stroke="#181008" stroke-width="1"/><path d="M.6 10.6H15.4V12.8H.6Z" fill="#4a2c1c" stroke="#181008" stroke-width=".8"/><path d="M4 6L6.6 9.4M6.6 6L4 9.4M9.4 6L12 9.4M12 6L9.4 9.4" stroke="#c82c1c" stroke-width="1.3"/><path d="M8 4.6V10.6" stroke="#8a6a50" stroke-width=".7"/></svg></div>
<div class="tbtn abs" style="left:528px"><svg width="16" height="16" viewBox="0 0 16 16"><rect x=".3" y=".3" width="15.4" height="15.4" fill="#000"/><path d="M2.6 1.6H13.4V4.4L11.6 6.2V10.4L9.8 12H6.2L4.4 10.4V6.2L2.6 4.4Z" fill="#12b41c"/><path d="M4.6 2.2H11.4L10.2 3.8H5.8Z" fill="#0a7a10"/><path d="M4.6 6L7.2 7.2M11.4 6L8.8 7.2M5.8 10.6Q8 8.4 10.2 10.6" stroke="#022802" stroke-width="1.2" fill="none"/><path d="M1.4 2V12M14.6 2V12" stroke="#0c8c14" stroke-width=".8"/><path d="M1.6 13.8H3.6M4.6 13.8H6.2M7.2 13.8H8.8M9.8 13.8H11.4M12.4 13.8H14.4" stroke="#18d028" stroke-width="1.6"/></svg></div>
<div class="tbtn abs" style="left:552px"><svg width="16" height="16" viewBox="0 0 16 16"><path d="M.5 10.5L4 14L5 11Z" fill="#b4b4b4"/><path d="M3.4 4.2L9.4 2.2L14.4 4.4V11L8.6 14.4L3.4 11.2Z" fill="#7c7a72" stroke="#3c3a36" stroke-width=".7"/><path d="M3.4 4.2L8.6 6.6L14.4 4.4L9.4 2.2Z" fill="#cbc7ba"/><path d="M8.6 6.6V14.4L14.4 11V4.4Z" fill="#5e5c56"/><path d="M3.4 4.2L8.6 6.6V14.4L3.4 11.2Z" fill="#8e8c84"/></svg></div>
<div class="tbtn abs" style="left:576px"><svg width="16" height="16" viewBox="0 0 16 16"><path d="M1.5 1.5H7.5V12.5H1.5Z" fill="#fff" stroke="#000" stroke-width="1"/><path d="M4.5 3.5H9.5L12.5 6.5V14.5H4.5Z" fill="#fff" stroke="#000" stroke-width="1.2"/><path d="M9.5 3.5V6.5H12.5" fill="none" stroke="#000" stroke-width="1"/><path d="M15 9.5H11V7.5L7.5 10.5L11 13.5V11.5H15Z" fill="#18c030" stroke="#087018" stroke-width=".7"/></svg></div>
<div class="tbtn abs" style="left:608px"><svg width="16" height="16" viewBox="0 0 16 16"><rect x="1" y="4.4" width="12.4" height="10.4" fill="#0c0804"/><rect x="2.5" y="6" width="9.4" height="7.2" fill="none" stroke="#d8b000" stroke-width=".9"/><path d="M12.6 1L15.6 .6L15 4.6Z" fill="#000"/><path d="M3.6 8.8L6.6 12L14 2.6" fill="none" stroke="#e43410" stroke-width="2.7"/></svg></div>

<div id="tree" class="abs">
<div class="vl" style="left:8px;top:0;height:486px"></div>
<div class="vl" style="left:27px;top:0px;height:201px"></div>
<div class="vl" style="left:27px;top:232px;height:33px"></div>
<div class="vl" style="left:27px;top:280px;height:225px"></div>
<div class="hl" style="left:29px;top:8px;width:10px"></div>
<div class="tr" style="top:0px"><svg class="ic" style="left:40px;top:1px" width="13" height="15"><use href="#doc"/></svg><span class="tx " style="left:57px;padding-left:2px">Add Point Копировать</span></div>
<div class="hl" style="left:29px;top:24px;width:10px"></div>
<div class="tr" style="top:16px"><svg class="ic" style="left:40px;top:1px" width="13" height="15"><use href="#doc"/></svg><span class="tx " style="left:57px;padding-left:2px">init1</span></div>
<div class="hl" style="left:29px;top:40px;width:10px"></div>
<div class="tr" style="top:32px"><svg class="ic" style="left:40px;top:1px" width="13" height="15"><use href="#doc"/></svg><span class="tx " style="left:57px;padding-left:2px">Init2</span></div>
<div class="hl" style="left:29px;top:56px;width:10px"></div>
<div class="tr" style="top:48px"><svg class="ic" style="left:40px;top:1px" width="13" height="15"><use href="#docx"/></svg><span class="tx red" style="left:57px;padding-left:2px">FirePiwer111 Копировать</span></div>
<div class="hl" style="left:29px;top:72px;width:10px"></div>
<div class="tr" style="top:64px"><svg class="ic" style="left:40px;top:1px" width="13" height="15"><use href="#doc"/></svg><span class="tx " style="left:57px;padding-left:2px">Безымянный триггер 006</span></div>
<div class="hl" style="left:29px;top:88px;width:10px"></div>
<div class="tr" style="top:80px"><svg class="ic" style="left:40px;top:1px" width="13" height="15"><use href="#doc"/></svg><span class="tx " style="left:57px;padding-left:2px;background:#eaeaea">Select Hero</span></div>
<div class="hl" style="left:29px;top:104px;width:10px"></div>
<div class="tr" style="top:96px"><svg class="ic" style="left:40px;top:1px" width="13" height="15"><use href="#docx"/></svg><span class="tx red" style="left:57px;padding-left:2px">Безымянный триггер 002</span></div>
<div class="hl" style="left:29px;top:120px;width:10px"></div>
<div class="tr" style="top:112px"><svg class="ic" style="left:40px;top:1px" width="13" height="15"><use href="#doc"/></svg><span class="tx " style="left:57px;padding-left:2px">sasd</span></div>
<div class="hl" style="left:29px;top:136px;width:10px"></div>
<div class="tr" style="top:128px"><svg class="ic" style="left:40px;top:1px" width="13" height="15"><use href="#doc"/></svg><span class="tx " style="left:57px;padding-left:2px">sasd Копировать</span></div>
<div class="hl" style="left:29px;top:152px;width:10px"></div>
<div class="tr" style="top:144px"><svg class="ic" style="left:39px;top:1px" width="14" height="13"><use href="#cmti"/></svg><span class="tx grn" style="left:57px;padding-left:2px;letter-spacing:-.43px;top:-1px">-------------------------</span></div>
<div class="hl" style="left:29px;top:168px;width:10px"></div>
<div class="tr" style="top:160px"><svg class="ic" style="left:40px;top:1px" width="13" height="15"><use href="#doc"/></svg><span class="tx " style="left:57px;padding-left:2px">give money1</span></div>
<div class="hl" style="left:29px;top:184px;width:10px"></div>
<div class="tr" style="top:176px"><svg class="ic" style="left:40px;top:1px" width="13" height="15"><use href="#docg"/></svg><span class="tx gry" style="left:57px;padding-left:2px">give money2</span></div>
<div class="hl" style="left:29px;top:200px;width:10px"></div>
<div class="tr" style="top:192px"><svg class="ic" style="left:40px;top:1px" width="13" height="15"><use href="#doc"/></svg><span class="tx " style="left:57px;padding-left:2px">giveLevelmoney</span></div>
<div class="hl" style="left:14px;top:216px;width:5px"></div>
<div class="tr" style="top:208px"><svg class="ic" style="left:4px;top:4px" width="9" height="9"><use href="#plus"/></svg><svg class="ic" style="left:19px;top:1px" width="15" height="13" viewBox="0 0 16 14" preserveAspectRatio="none"><use href="#fclosed" width="16" height="14"/></svg><span class="tx" style="left:39px">Initialization</span></div>
<div class="hl" style="left:14px;top:232px;width:5px"></div>
<div class="tr" style="top:224px"><svg class="ic" style="left:4px;top:4px" width="9" height="9"><use href="#minus"/></svg><svg class="ic" style="left:19px;top:1px" width="16" height="13" viewBox="0 0 17 14" preserveAspectRatio="none"><use href="#fopen" width="17" height="14"/></svg><span class="tx" style="left:39px">Мультиборд Сатанист</span></div>
<div class="hl" style="left:29px;top:248px;width:10px"></div>
<div class="tr" style="top:240px"><svg class="ic" style="left:40px;top:1px" width="13" height="15"><use href="#docx"/></svg><span class="tx red" style="left:57px;padding-left:2px">Miltibord</span></div>
<div class="hl" style="left:29px;top:264px;width:10px"></div>
<div class="tr" style="top:256px"><svg class="ic" style="left:40px;top:1px" width="13" height="15"><use href="#docx"/></svg><span class="tx red" style="left:57px;padding-left:2px">Безымянный триггер 003 Копировать 3</span></div>
<div class="hl" style="left:14px;top:280px;width:5px"></div>
<div class="tr" style="top:272px"><svg class="ic" style="left:4px;top:4px" width="9" height="9"><use href="#minus"/></svg><svg class="ic" style="left:19px;top:1px" width="16" height="13" viewBox="0 0 17 14" preserveAspectRatio="none"><use href="#fopen" width="17" height="14"/></svg><span class="tx" style="left:39px">Fire</span></div>
<div class="hl" style="left:29px;top:296px;width:10px"></div>
<div class="tr" style="top:288px"><svg class="ic" style="left:40px;top:1px" width="13" height="15"><use href="#docx"/></svg><span class="tx red" style="left:57px;padding-left:2px">Безымянный триггер 012</span></div>
<div class="hl" style="left:29px;top:312px;width:10px"></div>
<div class="tr" style="top:304px"><svg class="ic" style="left:40px;top:1px" width="13" height="15"><use href="#doc"/></svg><span class="tx " style="left:57px;padding-left:2px">StatslvlupFire1</span></div>
<div class="hl" style="left:29px;top:328px;width:10px"></div>
<div class="tr" style="top:320px"><svg class="ic" style="left:39px;top:1px" width="14" height="13"><use href="#cmti"/></svg><span class="tx grn" style="left:57px;padding-left:2px;letter-spacing:-.43px;top:-1px">-------------------------</span></div>
<div class="hl" style="left:29px;top:344px;width:10px"></div>
<div class="tr" style="top:336px"><svg class="ic" style="left:39px;top:1px" width="14" height="13"><use href="#cmti"/></svg><span class="tx grn" style="left:57px;padding-left:2px">FirePowerAttack</span></div>
<div class="hl" style="left:29px;top:360px;width:10px"></div>
<div class="tr" style="top:352px"><svg class="ic" style="left:40px;top:1px" width="13" height="15"><use href="#doc"/></svg><span class="tx " style="left:57px;padding-left:2px">FirePiwer111</span></div>
<div class="hl" style="left:29px;top:376px;width:10px"></div>
<div class="tr" style="top:368px"><svg class="ic" style="left:40px;top:1px" width="13" height="15"><use href="#doc"/></svg><span class="tx " style="left:57px;padding-left:2px">FirePiwer1</span></div>
<div class="hl" style="left:29px;top:392px;width:10px"></div>
<div class="tr" style="top:384px"><svg class="ic" style="left:40px;top:1px" width="13" height="15"><use href="#doc"/></svg><span class="tx " style="left:57px;padding-left:2px">FirePiwerminus</span></div>
<div class="hl" style="left:29px;top:408px;width:10px"></div>
<div class="tr" style="top:400px"><svg class="ic" style="left:39px;top:1px" width="14" height="13"><use href="#cmti"/></svg><span class="tx grn" style="left:57px;padding-left:2px">Превращение 1</span></div>
<div class="hl" style="left:29px;top:424px;width:10px"></div>
<div class="tr" style="top:416px"><svg class="ic" style="left:40px;top:1px" width="13" height="15"><use href="#doc"/></svg><span class="tx " style="left:57px;padding-left:2px">FireTransform1</span></div>
<div class="hl" style="left:29px;top:440px;width:10px"></div>
<div class="tr" style="top:432px"><svg class="ic" style="left:40px;top:1px" width="13" height="15"><use href="#docg"/></svg><span class="tx gry" style="left:57px;padding-left:2px">BackFireTransform</span></div>
<div class="hl" style="left:29px;top:456px;width:10px"></div>
<div class="tr" style="top:448px"><svg class="ic" style="left:39px;top:1px" width="14" height="13"><use href="#cmti"/></svg><span class="tx grn" style="left:57px;padding-left:2px">Превращение 2</span></div>
<div class="hl" style="left:29px;top:472px;width:10px"></div>
<div class="tr" style="top:464px"><svg class="ic" style="left:40px;top:1px" width="13" height="15"><use href="#doc"/></svg><span class="tx " style="left:57px;padding-left:2px">FireTransform21</span></div>
<div class="hl" style="left:29px;top:488px;width:10px"></div>
<div class="tr" style="top:480px"><svg class="ic" style="left:40px;top:1px" width="13" height="15"><use href="#docg"/></svg><span class="tx gry" style="left:57px;padding-left:2px">BackFireTransform2</span></div>
<div class="sbv" style="left:474px;top:0;height:486px"></div>
<div class="sbt" style="left:474px;top:36px;width:15px;height:193px"></div>
<svg class="abs" style="left:478px;top:6px" width="8" height="6"><path d="M.7 5L4 1.5L7.3 5" fill="none" stroke="#4d4d4d" stroke-width="2"/></svg>
<svg class="abs" style="left:478px;top:472px" width="8" height="6"><path d="M.7 1L4 4.5L7.3 1" fill="none" stroke="#4d4d4d" stroke-width="2"/></svg>
</div>
<div class="abs" style="left:492px;top:78px;width:2px;height:486px;background:#fff"></div>
<div class="abs" style="left:494px;top:78px;width:8px;height:486px;background:#eff3fb"></div>
<div class="cb" style="left:502px;top:79px"></div><svg class="abs" style="left:504.5px;top:81.5px" width="8" height="8"><path d="M.8 3.4L3 5.800000000000001L7.2 1" fill="none" stroke="#000" stroke-width="1.9"/></svg>
<div class="lbl" style="left:520px;top:79px">Включен</div>
<div class="cb" style="left:621px;top:79px"></div><svg class="abs" style="left:623.5px;top:81.5px" width="8" height="8"><path d="M.8 3.4L3 5.800000000000001L7.2 1" fill="none" stroke="#000" stroke-width="1.9"/></svg>
<div class="lbl" style="left:640px;top:79px">Изначально включен</div>
<div class="lbl" style="left:502px;top:98px">Комментарий к триггеру:</div>
<div class="abs" style="left:504px;top:94px;width:2px;height:4px;background:#8c8c8c"></div><div class="abs" style="left:504px;top:116px;width:2px;height:2px;background:#8c8c8c"></div>
<div id="cmt" class="abs"></div>
<svg class="abs" style="left:1059px;top:124px" width="8" height="6"><path d="M.7 5L4 1.5L7.3 5" fill="none" stroke="#bdbdbd" stroke-width="2"/></svg>
<svg class="abs" style="left:1059px;top:259px" width="8" height="6"><path d="M.7 1L4 4.5L7.3 1" fill="none" stroke="#bdbdbd" stroke-width="2"/></svg>
<div class="abs" style="left:498px;top:270px;width:573px;height:14px;background:#f4f7fc;border-top:1px solid #fff;border-bottom:1px solid #6e6e6e;border-right:2px solid #6e6e6e"></div>
<div class="abs" style="left:502px;top:280px;width:200px;height:20px;background:#f0f0f0"></div>
<div class="lbl" style="left:503px;top:280px">Функции триггера:</div>
<div class="abs" style="left:504px;top:297px;width:1px;height:4px;background:#696969"></div>
<div id="fl" class="abs">
<div class="vl" style="left:6px;top:0;height:233px"></div>
<div class="hl" style="left:7px;top:8px;width:10px"></div>
<div class="fr" style="top:0px"><svg class="ic" width="16" height="16"><use href="#fset"/></svg><span class="tx" style="">Установить FireHero[1] = (Входящая боевая единица)</span></div>
<div class="hl" style="left:7px;top:24px;width:10px"></div>
<div class="fr" style="top:16px"><svg class="ic" width="16" height="16"><use href="#fset"/></svg><span class="tx" style="">Установить FireHero[2] = Уголек 2 0074 &lt;gen&gt;</span></div>
<div class="hl" style="left:7px;top:40px;width:10px"></div>
<div class="fr" style="top:32px"><svg class="ic" width="16" height="16"><use href="#fset"/></svg><span class="tx" style="">Установить FireHero[3] = Уголек 3 0075 &lt;gen&gt;</span></div>
<div class="hl" style="left:7px;top:56px;width:10px"></div>
<div class="fr" style="top:48px"><svg class="ic" width="16" height="16"><use href="#fset"/></svg><span class="tx" style="">Установить FireHero[4] = Уголек4 0069 &lt;gen&gt;</span></div>
<div class="hl" style="left:7px;top:72px;width:10px"></div>
<div class="fr" style="top:64px"><svg class="ic" width="16" height="16"><use href="#fset"/></svg><span class="tx" style="">Установить FireHeroLevel2 = 0</span></div>
<div class="hl" style="left:7px;top:88px;width:10px"></div>
<div class="fr" style="top:80px"><svg class="ic" width="16" height="16"><use href="#fset"/></svg><span class="tx" style="">Установить FireHeroLevel3 = 0</span></div>
<div class="hl" style="left:7px;top:104px;width:10px"></div>
<div class="fr" style="top:96px"><svg class="ic" width="16" height="16"><use href="#fset"/></svg><span class="tx" style="">Установить FireHeroLevel4 = 0</span></div>
<div class="hl" style="left:7px;top:120px;width:10px"></div>
<div class="fr" style="top:112px"><svg class="ic" width="16" height="16"><use href="#fset"/></svg><span class="tx" style="">Установить StatsFireHero = 20</span></div>
<div class="hl" style="left:7px;top:136px;width:10px"></div>
<div class="abs" style="left:36px;top:128px;width:520px;height:16px;background:#0078d7;outline:1px dotted #e8a060;outline-offset:-1px"></div>
<div class="fr" style="top:128px"><svg class="ic" width="16" height="16"><use href="#flb"/></svg><span class="tx" style="color:#fff">Таблица рекордов - Создать таблицу рекордов для (Игроки, контролируемые с помощью (Контроль у (Владелец</span></div>
<div class="hl" style="left:7px;top:152px;width:10px"></div>
<div class="fr" style="top:144px"><svg class="ic" width="16" height="16"><use href="#fset"/></svg><span class="tx" style="">Установить Score = (Последняя созданная таблица рекордов)</span></div>
<div class="hl" style="left:7px;top:168px;width:10px"></div>
<div class="fr" style="top:160px"><svg class="ic" width="16" height="16"><use href="#fpg"/></svg><span class="tx" style="">Группа игроков - Выбрать каждого игрока в (Игроки, контролируемые с помощью (Контроль у (Владелец у</span></div>
<div class="hl" style="left:7px;top:184px;width:10px"></div>
<div class="fr" style="top:176px"><svg class="ic" width="16" height="16"><use href="#flb"/></svg><span class="tx" style="">Таблица рекордов - Сортировать Score по Значение в порядке По убыванию</span></div>
<div class="hl" style="left:7px;top:200px;width:10px"></div>
<div class="fr" style="top:192px"><svg class="ic" width="16" height="16"><use href="#fhero"/></svg><span class="tx" style="">Герой - Создать Огненный пентакль и дать его для (Входящая боевая единица)</span></div>
<div class="hl" style="left:7px;top:216px;width:10px"></div>
<div class="fr" style="top:208px"><svg class="ic" width="16" height="16"><use href="#fcam"/></svg><span class="tx" style="letter-spacing:-.08px">Камера - Применить камеру для (Владелец у (Входящая боевая единица)) в (Центр Область 001 &lt;gen&gt;)</span></div>
<div class="hl" style="left:7px;top:232px;width:10px"></div>
<div class="fr" style="top:224px"><svg class="ic" width="16" height="16"><use href="#fnb"/></svg><span class="tx" style="">Нейтральное здание - Удалить Уголек из Таверна (Сила) 0036 &lt;gen&gt;</span></div>
<svg class="abs" style="left:0px;top:240px" width="9" height="6"><path d="M0 6L6 1L9 2L4 6" fill="none" stroke="#333" stroke-width="1"/></svg>
<div class="fr" style="top:241px"><span class="tx" style="left:20px">Игрок - Действие</span></div>
</div>
<div class="abs" style="left:1054px;top:300px;width:16px;height:248px;background:#f0f0f0;border-top:1px solid #696969"></div>
<div class="sbt" style="left:1054px;top:364px;width:15px;height:17px"></div>
<svg class="abs" style="left:1058px;top:306px" width="8" height="6"><path d="M.7 5L4 1.5L7.3 5" fill="none" stroke="#4d4d4d" stroke-width="2"/></svg>
<svg class="abs" style="left:1058px;top:536px" width="8" height="6"><path d="M.7 1L4 4.5L7.3 1" fill="none" stroke="#4d4d4d" stroke-width="2"/></svg>
<div class="abs" style="left:503px;top:548px;width:568px;height:16px;background:#f0f0f0"></div>
<div class="sbt" style="left:552px;top:548px;width:184px;height:16px"></div>
<svg class="abs" style="left:508px;top:552px" width="6" height="8"><path d="M5 .7L1.5 4L5 7.3" fill="none" stroke="#4d4d4d" stroke-width="2"/></svg>
<svg class="abs" style="left:1042px;top:552px" width="6" height="8"><path d="M1 .7L4.5 4L1 7.3" fill="none" stroke="#4d4d4d" stroke-width="2"/></svg>
<svg class="abs" style="left:1059px;top:554px" width="9" height="9"><path d="M6 0H8V2H6ZM3 3H5V5H3ZM6 3H8V5H6ZM0 6H2V8H0ZM3 6H5V8H3ZM6 6H8V8H6Z" fill="#a8a8a8"/></svg>
</div>
</body>
</html>
